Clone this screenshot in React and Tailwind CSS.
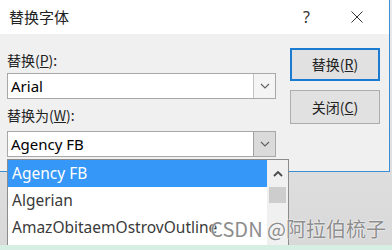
import React from "react";

const cjk = { fontFamily: '"Noto Sans CJK SC", "Noto Sans", sans-serif' };
const latin = { fontFamily: '"Noto Sans", "Open Sans", "Noto Sans CJK SC", sans-serif' };

function Chevron({ up = false, className = "" }) {
  return (
    <svg width="10" height="6" viewBox="0 0 10 6" className={className}>
      <path
        d={up ? "M1 5 L5 1 L9 5" : "M1 1 L5 5 L9 1"}
        fill="none"
        stroke="currentColor"
        strokeWidth={up ? "1.8" : "1.1"}
      />
    </svg>
  );
}

function Combo({ value, open }) {
  return (
    <div className="flex h-[26px] w-[269px] border border-[#a8a8a8] bg-white">
      <div className="flex flex-1 items-center pl-[3px] text-[15px] text-black" style={latin}>
        {value}
      </div>
      <div
        className={`flex w-[22px] items-center justify-center border-l ${
          open ? "border-[#a0a0a0] bg-[#dadada]" : "border-[#c4c4c4] bg-[#f4f4f4]"
        } text-[#606060]`}
      >
        <Chevron />
      </div>
    </div>
  );
}

function FontList() {
  const fonts = ["Agency FB", "Algerian", "AmazObitaemOstrovOutline"];
  return (
    <div className="absolute left-[7px] top-[159px] flex h-[110px] w-[282px] border border-[#8c8c8c] bg-white">
      <div className="flex w-[259px] flex-col">
        {fonts.map((f, i) => (
          <div
            key={f}
            className={`flex h-[27px] shrink-0 items-center pl-[4px] text-[15.5px] ${
              i === 0 ? "h-[26px] bg-[#3597f7] text-white" : "text-[#3a3a3a]"
            }`}
            style={latin}
          >
            {f}
          </div>
        ))}
      </div>
      <div className="flex w-[21px] flex-col bg-[#f0f0f0]">
        <div className="flex h-[27px] items-center justify-center text-[#4a4a4a]">
          <Chevron up />
        </div>
        <div className="mx-[2px] h-[16px] bg-[#cdcdcd]" />
      </div>
    </div>
  );
}

export default function App() {
  return (
    <div className="relative h-[250px] w-[392px] overflow-hidden bg-gradient-to-b from-[#ebebeb] to-[#d8d8d8]">
      <div className="h-[172px] w-[390px] border-b border-r border-[#3c8fd6] bg-[#f0f0f0]">
        <div className="flex h-[34px] items-center bg-white pl-[9px] pr-[26px]">
          <span className="text-[15px] text-[#222]" style={cjk}>
            替换字体
          </span>
          <span className="ml-auto mr-[41px] text-[16px] text-[#333]" style={latin}>
            ?
          </span>
          <svg width="12" height="12" viewBox="0 0 12 12" className="text-[#333]">
            <path d="M0.5 0.5 L11.5 11.5 M11.5 0.5 L0.5 11.5" stroke="currentColor" strokeWidth="1" />
          </svg>
        </div>
        <div className="flex gap-[14px] pl-[7px] pt-[14px]">
          <div className="flex flex-col">
            <div className="flex h-[25px] items-center text-[14px] text-[#222]" style={cjk}>
              替换(<span className="underline">P</span>):
            </div>
            <Combo value="Arial" />
            <div className="flex h-[32px] items-center text-[14px] text-[#222]" style={cjk}>
              替换为(<span className="underline">W</span>):
            </div>
            <Combo value="Agency FB" open />
          </div>
          <div className="flex flex-col gap-[9px]">
            <button
              className="h-[33px] w-[90px] border-2 border-[#1a7bd1] bg-[#e1e1e1] text-[14px] text-[#222]"
              style={cjk}
            >
              替换(<span className="underline">R</span>)
            </button>
            <button
              className="h-[34px] w-[90px] border border-[#adadad] bg-[#e1e1e1] text-[14px] text-[#222]"
              style={cjk}
            >
              关闭(<span className="underline">C</span>)
            </button>
          </div>
        </div>
      </div>
      <FontList />
      <div
        className="absolute right-[6px] top-[214px] text-[20px] text-[#8d8d8d]"
        style={{ ...cjk, textShadow: "0 0 2px #fff, 0 0 1px #fff" }}
      >
        CSDN @阿拉伯梳子
      </div>
      <div className="absolute bottom-0 left-0 h-[5px] w-full bg-[#d6eee3]" />
    </div>
  );
}
